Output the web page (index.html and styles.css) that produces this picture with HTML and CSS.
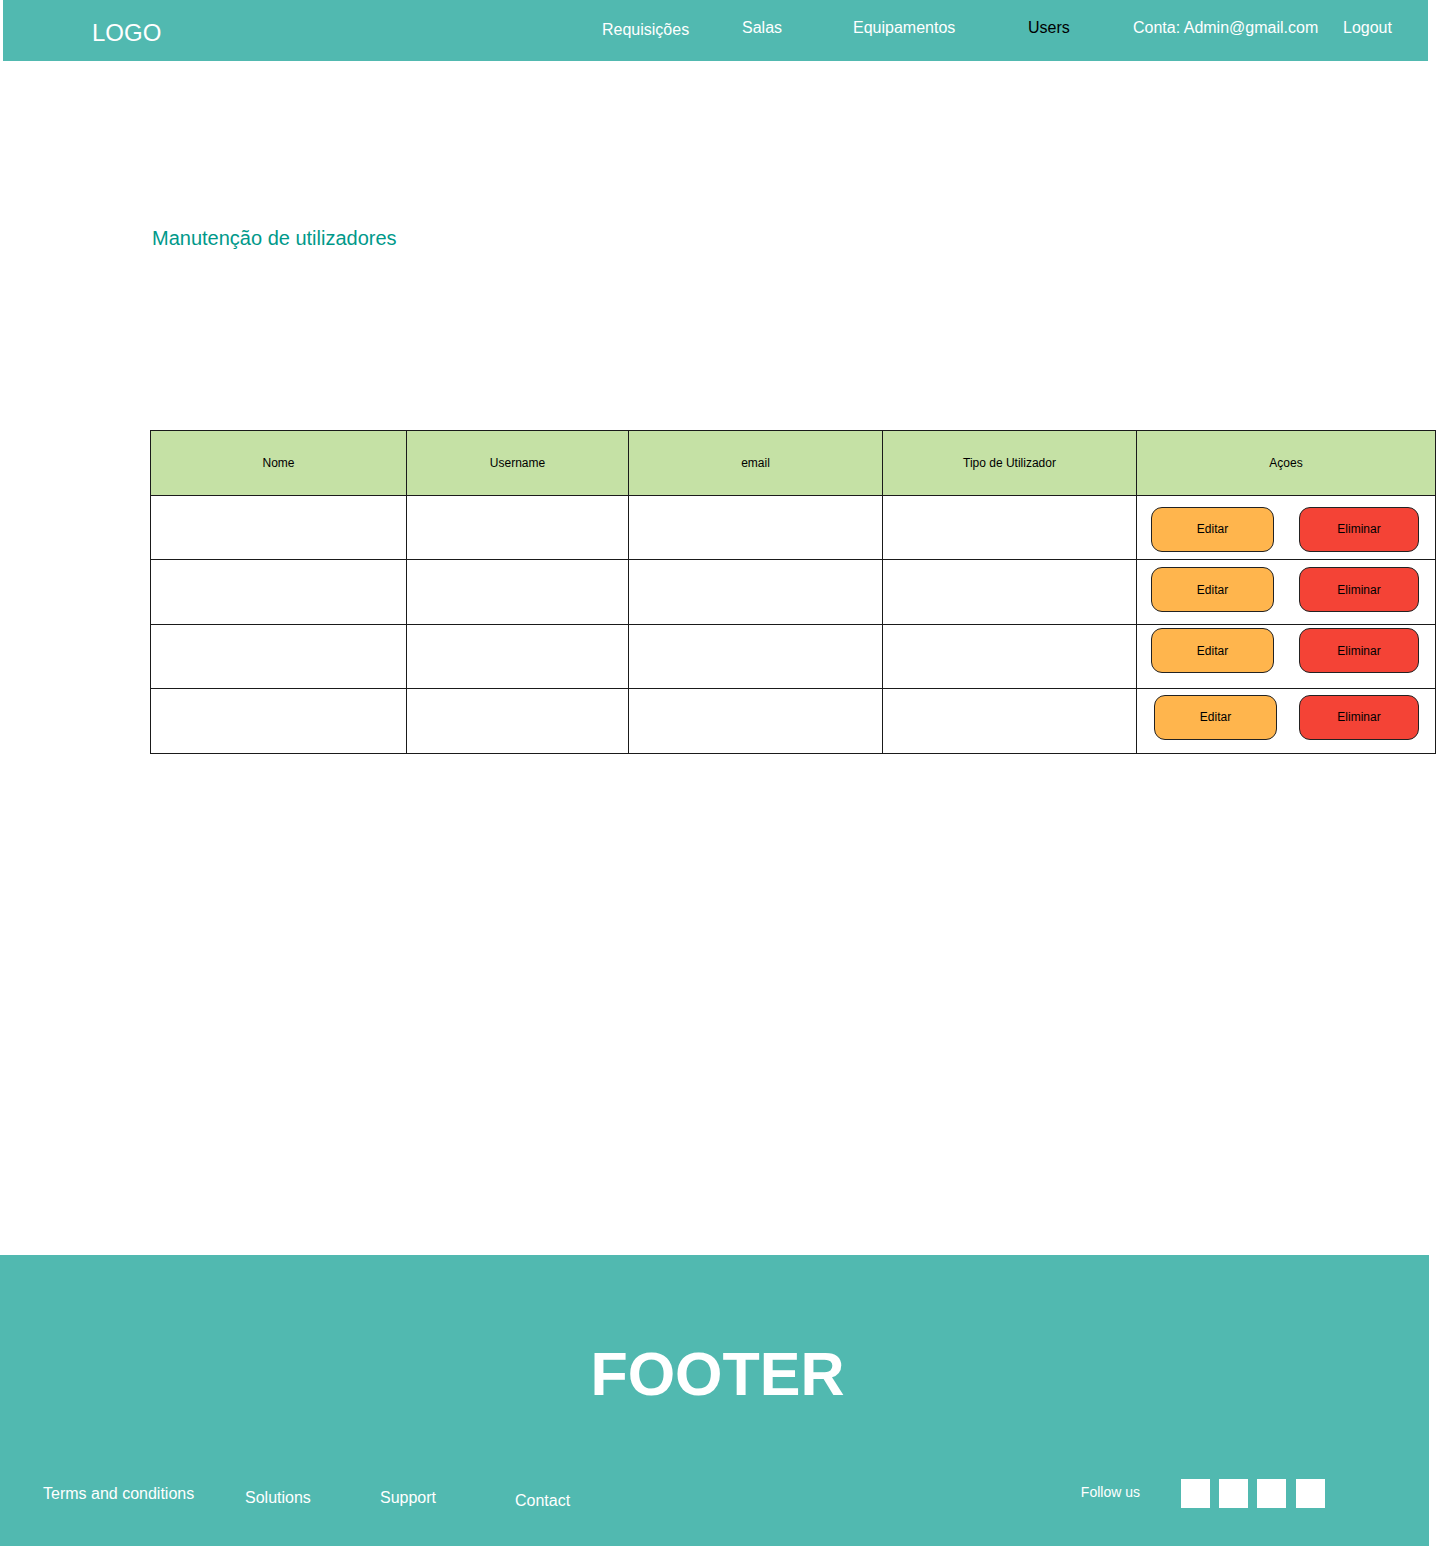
FILE: index.html
```html
<!DOCTYPE html>
<html>
<head>
    <title>Manutenção de utilizadores</title>
    <link rel="stylesheet" href="styles.css">
</head>
<body>
    <header class="topbar">
        <div class="logo">LOGO</div>
        <nav class="nav">
            <a class="nav-link nav-low">Requisições</a>
            <a class="nav-link">Salas</a>
            <a class="nav-link">Equipamentos</a>
            <a class="nav-link active">Users</a>
            <a class="nav-link">Conta: Admin@gmail.com</a>
            <a class="nav-link">Logout</a>
        </nav>
    </header>

    <main class="content">
        <h1 class="page-title">Manutenção de utilizadores</h1>

        <table class="users-table">
            <colgroup>
                <col class="col-nome">
                <col class="col-user">
                <col class="col-email">
                <col class="col-tipo">
                <col class="col-acoes">
            </colgroup>
            <thead>
                <tr>
                    <th>Nome</th>
                    <th>Username</th>
                    <th>email</th>
                    <th>Tipo de Utilizador</th>
                    <th>Açoes</th>
                </tr>
            </thead>
            <tbody>
                <tr class="row-a">
                    <td></td><td></td><td></td><td></td>
                    <td class="actions">
                        <div class="action-buttons">
                            <button class="btn btn-edit">Editar</button>
                            <button class="btn btn-delete">Eliminar</button>
                        </div>
                    </td>
                </tr>
                <tr class="row-b">
                    <td></td><td></td><td></td><td></td>
                    <td class="actions">
                        <div class="action-buttons">
                            <button class="btn btn-edit">Editar</button>
                            <button class="btn btn-delete">Eliminar</button>
                        </div>
                    </td>
                </tr>
                <tr class="row-c">
                    <td></td><td></td><td></td><td></td>
                    <td class="actions">
                        <div class="action-buttons">
                            <button class="btn btn-edit">Editar</button>
                            <button class="btn btn-delete">Eliminar</button>
                        </div>
                    </td>
                </tr>
                <tr class="row-d">
                    <td></td><td></td><td></td><td></td>
                    <td class="actions">
                        <div class="action-buttons shifted">
                            <button class="btn btn-edit">Editar</button>
                            <button class="btn btn-delete">Eliminar</button>
                        </div>
                    </td>
                </tr>
            </tbody>
        </table>
    </main>

    <footer class="footer">
        <div class="footer-title">FOOTER</div>
        <div class="footer-bottom">
            <div class="footer-links">
                <a class="footer-link link-terms">Terms and conditions</a>
                <a class="footer-link link-solutions">Solutions</a>
                <a class="footer-link link-support">Support</a>
                <a class="footer-link link-contact">Contact</a>
            </div>
            <div class="follow">
                <span class="follow-text">Follow us</span>
                <div class="social">
                    <span class="social-box"></span>
                    <span class="social-box"></span>
                    <span class="social-box"></span>
                    <span class="social-box"></span>
                </div>
            </div>
        </div>
    </footer>
</body>
</html>
```

FILE: styles.css
```css
:root {
    --teal: #51b9b0;
    --title-teal: #00998a;
    --head-green: #c5e1a5;
    --orange: #ffb54d;
    --red: #f44336;
    --line: #1a1a1a;
}

body {
    margin: 0;
    font-family: 'Liberation Sans', Arial, sans-serif;
    background: #ffffff;
    color: #000000;
}

/* Top bar */
.topbar {
    margin-left: 3px;
    width: 1425px;
    height: 61px;
    background: var(--teal);
    display: flex;
    align-items: flex-start;
    box-sizing: border-box;
    padding-left: 89px;
}

.logo {
    color: #ffffff;
    font-size: 24px;
    padding-top: 19px;
    width: 510px;
}

.nav {
    display: grid;
    grid-template-columns: 140px 111px 175px 105px 210px auto;
    padding-top: 19px;
}

.nav-link {
    color: #ffffff;
    font-size: 16px;
    cursor: pointer;
}

.nav-low {
    padding-top: 2px;
}

.nav-link.active {
    color: #000000;
}

/* Main */
.content {
    height: 1194px;
}

.page-title {
    margin: 0;
    padding: 166px 0 0 152px;
    font-size: 20px;
    font-weight: normal;
    color: var(--title-teal);
    height: 23px;
}

.users-table {
    margin: 180px 0 0 150px;
    width: 1285px;
    border-collapse: collapse;
    table-layout: fixed;
    font-size: 12px;
}

.col-nome { width: 256px; }
.col-user { width: 222px; }
.col-email { width: 254px; }
.col-tipo { width: 254px; }
.col-acoes { width: 299px; }

.users-table th,
.users-table td {
    border: 1px solid var(--line);
    padding: 0;
}

.users-table th {
    background: var(--head-green);
    font-weight: normal;
    height: 64px;
}

.row-a td { height: 63px; }
.row-b td { height: 64px; }
.row-c td { height: 63px; }
.row-d td { height: 64px; }

.action-buttons {
    display: flex;
    gap: 25px;
    padding-left: 14px;
}

.row-a .action-buttons { padding-top: 3px; }
.row-b .action-buttons { padding-bottom: 5px; }
.row-c .action-buttons { padding-bottom: 12px; }
.row-d .action-buttons { padding-bottom: 8px; }

.action-buttons.shifted {
    padding-left: 17px;
    gap: 22px;
}

.btn {
    height: 45px;
    border: 1px solid #222;
    border-radius: 11px;
    font-family: 'Liberation Sans', Arial, sans-serif;
    font-size: 12px;
    color: #000000;
    padding: 0;
    cursor: pointer;
}

.btn-edit {
    width: 123px;
    background: var(--orange);
}

.btn-delete {
    width: 120px;
    background: var(--red);
}

/* Footer */
.footer {
    width: 1429px;
    height: 291px;
    background: var(--teal);
    color: #ffffff;
    box-sizing: border-box;
    padding-top: 84px;
}

.footer-title {
    text-align: center;
    font-size: 61px;
    font-weight: bold;
    line-height: 70px;
    padding-left: 6px;
}

.footer-bottom {
    display: flex;
    justify-content: space-between;
    margin-top: 76px;
    padding: 0 104px 0 43px;
}

.footer-links {
    display: flex;
    align-items: flex-start;
}

.footer-link {
    font-size: 16px;
    cursor: pointer;
}

.link-terms { width: 202px; }
.link-solutions { width: 135px; padding-top: 4px; }
.link-support { width: 135px; padding-top: 4px; }
.link-contact { padding-top: 7px; }

.follow {
    display: flex;
    align-items: flex-start;
    gap: 41px;
    margin-top: -8px;
}

.follow-text {
    font-size: 14px;
    padding-top: 7px;
}

.social {
    display: flex;
    gap: 9px;
    padding-top: 2px;
}

.social-box {
    width: 29px;
    height: 29px;
    background: #ffffff;
}

.social-box:last-child {
    margin-left: 1px;
}
```
